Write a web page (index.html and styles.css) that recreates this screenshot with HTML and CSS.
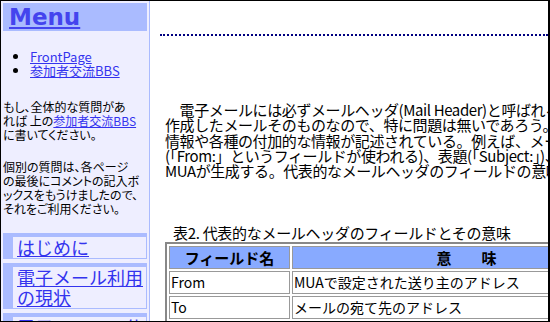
FILE: index.html
```html
<!DOCTYPE html>
<html lang="ja">
<head>
  <meta charset="UTF-8">
  <title>電子メールの仕組み</title>
  <link rel="stylesheet" href="styles.css">
</head>
<body>
  <div class="frame">
    <div class="side">
      <div class="menu-title"><a href="#">Menu</a></div>
      <ul class="menu-list">
        <li><a href="#">FrontPage</a></li>
        <li><a href="#">参加者交流BBS</a></li>
      </ul>
      <p class="note">もし、全体的な質問があ<br>れば 上の<a href="#">参加者交流BBS</a><br>に書いてください。</p>
      <p class="note">個別の質問は、各ページ<br>の最後にコメントの記入ボ<br>ックスをもうけましたので、<br>それをご利用ください。</p>
      <div class="nav-item"><a href="#">はじめに</a></div>
      <div class="nav-item"><a href="#">電子メール利用の現状</a></div>
      <div class="nav-item"><a href="#">電子メールの仕組み</a></div>
    </div>

    <div class="main">
      <div class="rule"></div>
      <p class="body-text">
        <span>　電子メールには必ずメールヘッダ(Mail Header)と呼ばれる部分が存在する。本文はユーザが</span>
        <span>作成したメールそのものなので、特に問題は無いであろう。メールヘッダには配送に必要な</span>
        <span>情報や各種の付加的な情報が記述されている。例えば、メールの送り主のアドレス</span>
        <span>(「From:」というフィールドが使われる)、表題(「Subject:」)、送信日時などで、これらは</span>
        <span>MUAが生成する。代表的なメールヘッダのフィールドの意味を表2に示す。</span>
      </p>
      <p class="caption">表2. 代表的なメールヘッダのフィールドとその意味</p>
      <table class="fields">
        <thead>
          <tr>
            <th class="col-name">フィールド名</th>
            <th>意　　味</th>
          </tr>
        </thead>
        <tbody>
          <tr>
            <td>From</td>
            <td>MUAで設定された送り主のアドレス</td>
          </tr>
          <tr>
            <td>To</td>
            <td>メールの宛て先のアドレス</td>
          </tr>
          <tr>
            <td>Subject</td>
            <td>メールの表題</td>
          </tr>
        </tbody>
      </table>
    </div>
  </div>
</body>
</html>
```

FILE: styles.css
```css
html, body {
  margin: 0;
  padding: 0;
  height: 322px;
  overflow: hidden;
  background-color: #fff;
}
body {
  font-family: "Noto Sans CJK JP", "DejaVu Sans", sans-serif;
  color: #000;
}
a {
  color: #3333ee;
}
.frame {
  display: flex;
  height: 322px;
  box-sizing: border-box;
  border-top: 1px solid #000;
  border-left: 1px solid #000;
  border-right: 2px solid #000;
  border-bottom: 1px solid #000;
  overflow: hidden;
}
.side {
  width: 148px;
  flex-shrink: 0;
  background-color: #eeeeff;
  border-right: 1px solid #aabbff;
}
.menu-title {
  margin: 2px 2px 0 2px;
  height: 28px;
  padding-left: 6px;
  background-color: #aabbff;
  font-family: "DejaVu Sans", sans-serif;
  font-weight: bold;
  font-size: 23px;
  line-height: 28px;
}
.menu-title a {
  color: #4444ee;
}
.menu-list {
  margin: 19px 0 0 0;
  padding-left: 29px;
  font-size: 13px;
  line-height: 14px;
}
.note {
  margin: 22px 0 0 0;
  padding-left: 2px;
  font-size: 12px;
  line-height: 14px;
  font-feature-settings: "palt";
  white-space: nowrap;
}
.note + .note {
  margin-top: 18px;
}
.nav-item {
  margin: 4px 2px 0 2px;
  padding: 4px 1px 1px 10px;
  background-color: #aabbff;
}
.note + .nav-item {
  margin-top: 17px;
}
.nav-item a {
  display: block;
  padding: 0 0 1px 4px;
  background-color: #eeeeff;
  font-size: 18px;
  line-height: 20px;
}
.main {
  flex: 1;
  min-width: 0;
  overflow: hidden;
  padding-left: 10px;
}
.rule {
  margin-top: 33px;
  border-top: 2px dotted #000080;
}
.body-text {
  margin: 66px 0 0 5px;
  font-size: 15px;
  letter-spacing: -0.4px;
  line-height: 15.3px;
  white-space: nowrap;
}
.body-text span {
  display: block;
}
.caption {
  margin: 47px 0 0 13px;
  font-size: 15px;
  letter-spacing: -0.3px;
  line-height: 15px;
  white-space: nowrap;
}
.fields {
  margin: 2px 0 0 5px;
  width: 480px;
  border: 2px solid #888;
  border-spacing: 2px;
  font-size: 14px;
}
.fields th, .fields td {
  border: 1px solid #999;
  padding: 0 1px;
  height: 21px;
  line-height: 17px;
  white-space: nowrap;
}
.fields th {
  background-color: #88aaff;
  font-size: 15px;
}
.fields td {
  text-align: left;
}
.col-name {
  width: 117px;
}
```
